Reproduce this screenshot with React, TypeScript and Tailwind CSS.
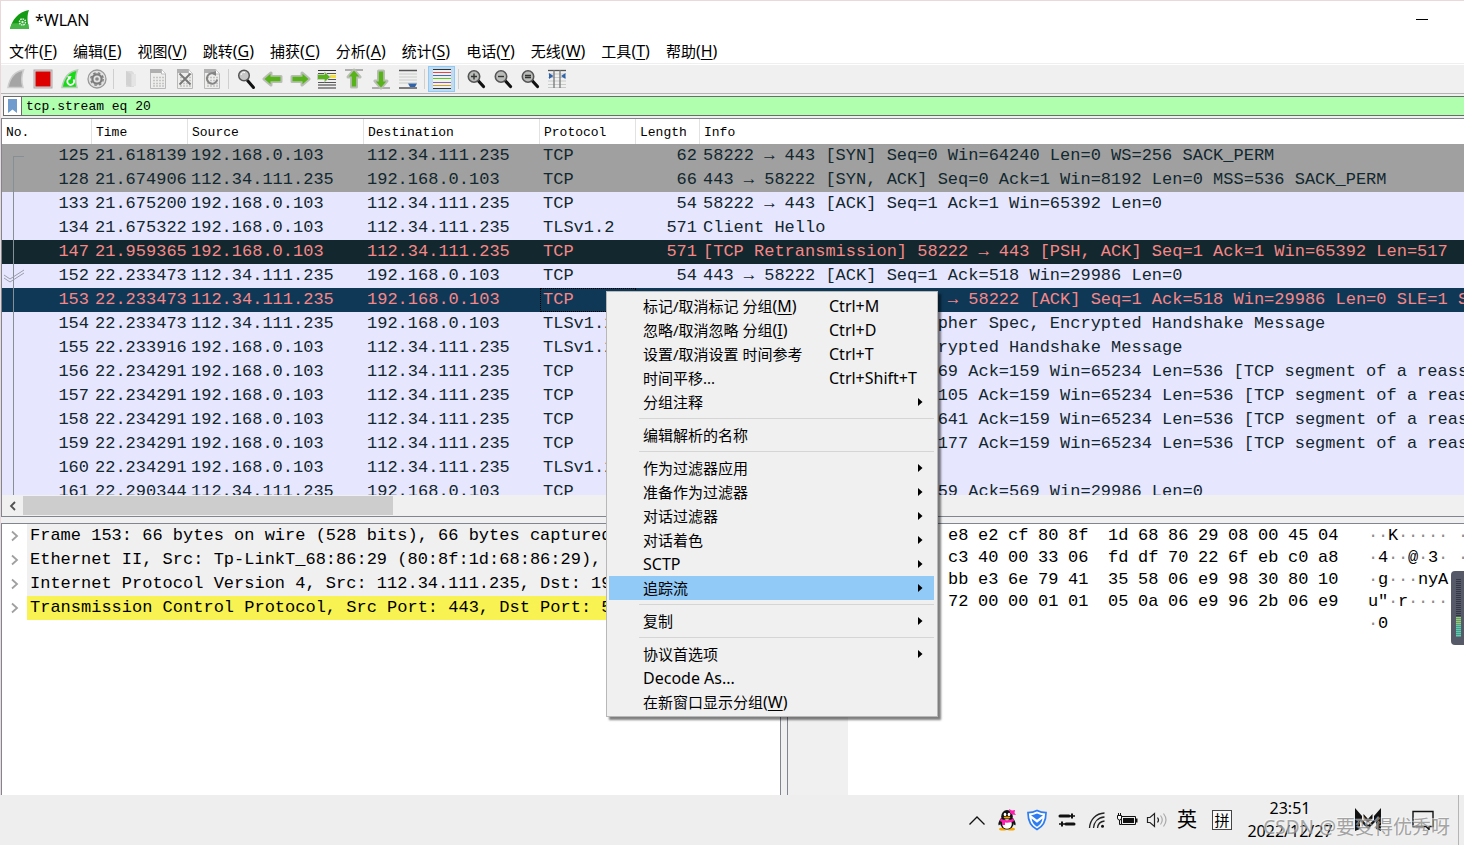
import React from "react";

const MONO = "font-['Liberation_Mono',monospace]";

type Tone = "gray" | "tls" | "bad" | "selected";

const toneClass: Record<Tone, string> = {
  gray: "bg-[#a0a0a0] text-[#12272e]",
  tls: "bg-[#e7e6ff] text-[#12272e]",
  bad: "bg-[#12272e] text-[#f78787]",
  selected: "bg-[#0f3857] text-[#f78787]",
};

const LOCAL = "192.168.0.103";
const REMOTE = "112.34.111.235";

type Packet = [number, string, boolean, string, string, string, Tone];

const packets: Packet[] = [
  [125, "21.618139", true, "TCP", "62", "58222 → 443 [SYN] Seq=0 Win=64240 Len=0 WS=256 SACK_PERM", "gray"],
  [128, "21.674906", false, "TCP", "66", "443 → 58222 [SYN, ACK] Seq=0 Ack=1 Win=8192 Len=0 MSS=536 SACK_PERM", "gray"],
  [133, "21.675200", true, "TCP", "54", "58222 → 443 [ACK] Seq=1 Ack=1 Win=65392 Len=0", "tls"],
  [134, "21.675322", true, "TLSv1.2", "571", "Client Hello", "tls"],
  [147, "21.959365", true, "TCP", "571", "[TCP Retransmission] 58222 → 443 [PSH, ACK] Seq=1 Ack=1 Win=65392 Len=517", "bad"],
  [152, "22.233473", false, "TCP", "54", "443 → 58222 [ACK] Seq=1 Ack=518 Win=29986 Len=0", "tls"],
  [153, "22.233473", false, "TCP", "66", "[TCP Dup ACK 152#1] 443 → 58222 [ACK] Seq=1 Ack=518 Win=29986 Len=0 SLE=1 SRE=518", "selected"],
  [154, "22.233473", false, "TLSv1.2", "", "Server Hello, Change Cipher Spec, Encrypted Handshake Message", "tls"],
  [155, "22.233916", true, "TLSv1.2", "", "Change Cipher Spec, Encrypted Handshake Message", "tls"],
  [156, "22.234291", true, "TCP", "590", "58222 → 443 [ACK] Seq=569 Ack=159 Win=65234 Len=536 [TCP segment of a reassembled PDU]", "tls"],
  [157, "22.234291", true, "TCP", "590", "58222 → 443 [ACK] Seq=1105 Ack=159 Win=65234 Len=536 [TCP segment of a reassembled PDU]", "tls"],
  [158, "22.234291", true, "TCP", "590", "58222 → 443 [ACK] Seq=1641 Ack=159 Win=65234 Len=536 [TCP segment of a reassembled PDU]", "tls"],
  [159, "22.234291", true, "TCP", "590", "58222 → 443 [ACK] Seq=2177 Ack=159 Win=65234 Len=536 [TCP segment of a reassembled PDU]", "tls"],
  [160, "22.234291", true, "TLSv1.2", "", "Application Data", "tls"],
  [161, "22.290344", false, "TCP", "54", "443 → 58222 [ACK] Seq=159 Ack=569 Win=29986 Len=0", "tls"],
];

const menus: [string, string][] = [
  ["文件", "F"], ["编辑", "E"], ["视图", "V"], ["跳转", "G"], ["捕获", "C"], ["分析", "A"],
  ["统计", "S"], ["电话", "Y"], ["无线", "W"], ["工具", "T"], ["帮助", "H"],
];

const details = [
  "Frame 153: 66 bytes on wire (528 bits), 66 bytes captured (528 bits)",
  "Ethernet II, Src: Tp-LinkT_68:86:29 (80:8f:1d:68:86:29), Dst:",
  "Internet Protocol Version 4, Src: 112.34.111.235, Dst: 192.168.0.103",
  "Transmission Control Protocol, Src Port: 443, Dst Port: 58222",
];

const hexRows: [string, string, string, string][] = [
  ["e8 e2 cf 80 8f", "1d 68 86 29 08 00 45 04", "··K·····", "·····"],
  ["c3 40 00 33 06", "fd df 70 22 6f eb c0 a8", "·4··@·3·", "·"],
  ["bb e3 6e 79 41", "35 58 06 e9 98 30 80 10", "·g···nyA", "5"],
  ["72 00 00 01 01", "05 0a 06 e9 96 2b 06 e9", "u\"·r····", "·"],
  ["", "", "·0", ""],
];

type MenuEntry = { label: string; latin?: boolean; key?: string; shortcut?: string; sub?: boolean; active?: boolean } | null;

const contextMenu: MenuEntry[] = [
  { label: "标记/取消标记 分组", key: "M", shortcut: "Ctrl+M" },
  { label: "忽略/取消忽略 分组", key: "I", shortcut: "Ctrl+D" },
  { label: "设置/取消设置 时间参考", shortcut: "Ctrl+T" },
  { label: "时间平移...", shortcut: "Ctrl+Shift+T" },
  { label: "分组注释", sub: true },
  null,
  { label: "编辑解析的名称" },
  null,
  { label: "作为过滤器应用", sub: true },
  { label: "准备作为过滤器", sub: true },
  { label: "对话过滤器", sub: true },
  { label: "对话着色", sub: true },
  { label: "SCTP", latin: true, sub: true },
  { label: "追踪流", sub: true, active: true },
  null,
  { label: "复制", sub: true },
  null,
  { label: "协议首选项", sub: true },
  { label: "Decode As...", latin: true },
  { label: "在新窗口显示分组", key: "W" },
];

function AccessKey({ k }: { k: string }) {
  return (
    <span className="text-base">
      (<u className="underline-offset-2">{k}</u>)
    </span>
  );
}

function Svg({ children }: { children: React.ReactNode }) {
  return (
    <svg width="22" height="22" viewBox="0 0 22 22" aria-hidden="true">
      {children}
    </svg>
  );
}

const FIN = "M3 19.5C4.500 11 9 3.500 18.500 2C16.500 7.500 16 13 18 19.500Z";

function Magnifier({ inner }: { inner?: React.ReactNode }) {
  return (
    <Svg>
      <path d="M13 12.500l5.500 6" stroke="#111" strokeWidth="3.200" strokeLinecap="round" />
      <circle cx="9" cy="8.500" r="5.700" fill="#b9bcb8" stroke="#555" strokeWidth="1.600" />
      {inner}
    </Svg>
  );
}

function GreenArrow({ turn, bar }: { turn: number; bar?: number }) {
  return (
    <Svg>
      {bar !== undefined && <path d={`M2 ${bar}h18`} stroke="#999" strokeWidth="1.500" />}
      <g transform={`rotate(${turn} 11 11)`}>
        <path d="M2 11l7-6v3.500h10v5h-10v3.500z" fill="#55ad14" stroke="#b9beb5" strokeWidth="3" strokeLinejoin="round" />
        <path d="M2.500 11l6-5.200v3h10v4.400h-10v3z" fill="#58b31a" />
      </g>
    </Svg>
  );
}

function Sheet({ children }: { children?: React.ReactNode }) {
  return (
    <Svg>
      <path d="M3.500 1.500h11l4 4v15h-15z" fill="#eeeeec" stroke="#b9b9b9" />
      <path d="M3 1h12l2 4H3z" fill="#b0b0b0" />
      <path d="M14.500 1.500v4.500h4" fill="#fff" stroke="#bbb" />
      <path d="M6 9.500h11M6 12.500h11M6 15.500h11M6 18h11" stroke="#c4c4c4" strokeWidth="1.500" strokeDasharray="2 1" />
      {children}
    </Svg>
  );
}

const toolbar: ([string, React.ReactNode] | null)[] = [
  ["开始捕获", <Svg><path d={FIN} fill="#a5a5a5" stroke="#cdcdcd" strokeWidth="1.500" /></Svg>],
  ["停止捕获", <Svg><rect x="2" y="2" width="18" height="18" fill="#d6d6d6" stroke="#aaa" /><rect x="3.500" y="3.500" width="15" height="15" fill="#dc0000" /></Svg>],
  ["重新开始捕获", <Svg><path d={FIN} fill="#16dc16" stroke="#b9ccb9" strokeWidth="1.500" /><path d="M14.500 11.500a3.400 3.400 0 1 1-4.500-1" fill="none" stroke="#fff" strokeWidth="1.800" /><path d="M8 8.500l4.500-.5-1.500 4z" fill="#fff" /></Svg>],
  ["捕获选项", <Svg><circle cx="11" cy="11" r="9" fill="#e2e2e2" stroke="#999" strokeWidth="1.300" /><circle cx="11" cy="11" r="4.600" fill="none" stroke="#7c7c7c" strokeWidth="2.200" /><circle cx="11" cy="11" r="6.200" fill="none" stroke="#7c7c7c" strokeWidth="1.400" strokeDasharray="2.500 2.400" /><circle cx="11" cy="11" r="1.800" fill="#888" /></Svg>],
  null,
  ["打开", <Svg><path d="M6 3h6l2 2v14H6z" fill="#dcdcdc" /><path d="M12 6h4v12h-4z" fill="#e4e4e4" /><path d="M6 3l5 3v13l-5-2z" fill="#d2d2d2" /></Svg>],
  ["保存", <Sheet />],
  ["关闭", <Sheet><path d="M5.500 5.500l11 11M16.500 5.500l-11 11" stroke="#777" strokeWidth="1.800" /></Sheet>],
  ["重新加载", <Sheet><path d="M14.500 6.500a5.200 5.200 0 1 0 1.700 5" fill="none" stroke="#858585" strokeWidth="2" /><path d="M10 5l5-2v5z" fill="#858585" /></Sheet>],
  null,
  ["查找", <Svg><path d="M12.500 12.500l6 7" stroke="#111" strokeWidth="3" strokeLinecap="round" /><circle cx="9" cy="7.500" r="5.300" fill="#c6c6c6" stroke="#555" strokeWidth="1.500" /><path d="M6 7a3 3 0 0 1 4-2.500" stroke="#fff" fill="none" /></Svg>],
  ["上一个", <GreenArrow turn={0} />],
  ["下一个", <GreenArrow turn={180} />],
  ["转到分组", <Svg><path d="M2 2.500h18M2 17h18M2 20h18" stroke="#333" strokeWidth="1.200" /><path d="M2 5.500h18M2 11.500h18M2 14.500h18" stroke="#555" /><path d="M14 8.500h6" stroke="#f5df32" strokeWidth="3" /><path d="M1.500 6.500h7V4l6 5-6 5v-2.500h-7z" fill="#58b31a" stroke="#c4ccbe" /></Svg>],
  ["首个分组", <GreenArrow turn={90} bar={2} />],
  ["最后分组", <GreenArrow turn={270} bar={20} />],
  ["自动滚动", <Svg><path d="M2 2.500h18M2 20h18" stroke="#555" strokeWidth="1.300" /><path d="M2 6h18M2 9h18M2 12h18M2 15h18" stroke="#c8ccc8" /><path d="M11 15.500h9l-2 3.500h-5z" fill="#2f64ad" /></Svg>],
  null,
  ["着色", <Svg><path d="M2 1.500h18M2 20.500h18" stroke="#333" /><path d="M2 2h18v18H2z" fill="#f0f0f0" /><path d="M2 4.500h18" stroke="#e04a4a" /><path d="M2 7.500h18" stroke="#3a71b5" /><path d="M2 10.500h18" stroke="#5cc624" /><path d="M2 14.500h18" stroke="#8465a0" /><path d="M2 17.500h18" stroke="#c9a31c" /></Svg>],
  null,
  ["放大", <Magnifier inner={<path d="M6 8.500h6M9 5.500v6" stroke="#333" strokeWidth="1.400" />} />],
  ["缩小", <Magnifier inner={<path d="M6 8.500h6" stroke="#333" strokeWidth="1.400" />} />],
  ["正常大小", <Magnifier inner={<path d="M6 7.500h6M6 9.500h6" stroke="#333" strokeWidth="1.400" />} />],
  ["调整列宽", <Svg><path d="M2 2.500h18" stroke="#555" strokeWidth="1.300" /><path d="M2 6h18M2 9.500h18M2 13h18M2 16.500h18M2 19.500h18" stroke="#c8ccc8" /><path d="M8 2v18M14 2v18" stroke="#777" strokeWidth="1.300" /><path d="M3 5l4.500 3L3 11zM19.500 5L15 8l4.500 3z" fill="#2f64ad" /></Svg>],
];

function Ascii({ text }: { text: string }) {
  return (
    <span className="flex">
      {text.split("").map((c, i) => (
        <span key={i} className={c === "·" ? "w-[10px] text-[#8c8c8c]" : "w-[10px]"}>{c}</span>
      ))}
    </span>
  );
}

function Bytes({ text }: { text: string }) {
  return (
    <>
      {text.split(" ").filter(Boolean).map((b, i) => (
        <span key={i} className="w-[30px]">{b}</span>
      ))}
    </>
  );
}

function PacketList() {
  const head = "border-r border-[#e2e2e2] p-0 pt-[2px] pl-1 text-left font-normal";
  return (
    <section className="flex min-h-0 flex-[398_1_0px] flex-col border-y border-l border-[#7f8591] bg-white">
      <div className="relative min-h-0 flex-1 overflow-hidden">
        <table className={`w-full table-fixed border-separate border-spacing-0 whitespace-pre ${MONO}`}>
          <colgroup>
            <col className="w-[90px]" />
            <col className="w-[96px]" />
            <col className="w-[176px]" />
            <col className="w-[176px]" />
            <col className="w-[96px]" />
            <col className="w-[64px]" />
            <col />
          </colgroup>
          <thead>
            <tr className="h-[25px] text-[13px] leading-5 text-black">
              <th className={head}>No.</th>
              <th className={head}>Time</th>
              <th className={head}>Source</th>
              <th className={head}>Destination</th>
              <th className={head}>Protocol</th>
              <th className={head}>Length</th>
              <th className="p-0 pt-[2px] pl-1 text-left font-normal">Info</th>
            </tr>
          </thead>
          <tbody className="text-[17px] leading-6">
            {packets.map(([no, time, outgoing, proto, len, info, tone]) => (
              <tr key={no} className={`h-6 ${toneClass[tone]}`}>
                <td className="p-0 pr-[3px] text-right">{no}</td>
                <td className="p-0 pl-[3px]">{time}</td>
                <td className="p-0 pl-[3px]">{outgoing ? LOCAL : REMOTE}</td>
                <td className="p-0 pl-[3px]">{outgoing ? REMOTE : LOCAL}</td>
                <td className={tone === "selected" ? "p-0 pl-[3px] outline-1 -outline-offset-1 outline-dotted outline-black" : "p-0 pl-[3px]"}>{proto}</td>
                <td className="p-0 pr-[3px] text-right">{len}</td>
                <td className="overflow-hidden p-0 pl-[3px]">{info}</td>
              </tr>
            ))}
          </tbody>
        </table>
        <div className="absolute top-[37px] bottom-0 left-[11px] w-[11px] border-t border-l border-[#868e96]" />
        <svg className="absolute top-[150px] left-[2px]" width="20" height="14" viewBox="0 0 20 14" aria-hidden="true">
          <path d="M0 6l6 4L20 1M0 9l6 4L20 4" fill="none" stroke="#9a9dab" />
        </svg>
      </div>
      <div className="flex h-[21px] shrink-0 bg-[#f0f0f0]">
        <button aria-label="向左滚动" className="flex w-[21px] items-center justify-center">
          <svg width="8" height="10" viewBox="0 0 8 10"><path d="M6 1L2 5l4 4" fill="none" stroke="#505050" strokeWidth="1.800" /></svg>
        </button>
        <div className="my-px w-[370px] bg-[#cdcdcd]" />
      </div>
    </section>
  );
}

function ContextMenu() {
  return (
    <div role="menu" className="absolute top-[291px] left-[606px] w-[332px] border border-[#b8b8b8] bg-[#f0f0f0] p-[2px] pr-[3px] text-[15px] text-black shadow-[3px_3px_2px_rgba(0,0,0,0.5)]">
      {contextMenu.map((m, i) =>
        m === null ? (
          <div key={i} role="separator" className="flex h-[9px] items-center pl-[30px]"><div className="h-px w-full bg-[#d5d5d5]" /></div>
        ) : (
          <button key={i} role="menuitem" className={`flex h-6 w-full items-center pl-[34px] text-left leading-6 whitespace-pre ${m.active ? "bg-[#91c9f7]" : ""}`}>
            <span className={m.latin ? "w-[186px] text-base" : "w-[186px]"}>{m.label}{m.key && <AccessKey k={m.key} />}</span>
            <span className="flex-1 text-base">{m.shortcut}</span>
            {m.sub && <svg className="mr-[11px]" width="5" height="8" viewBox="0 0 5 8"><path d="M0 0l4.500 4L0 8z" fill="#000" /></svg>}
          </button>
        )
      )}
    </div>
  );
}

function Taskbar() {
  const slot = "flex w-[30px] justify-center";
  return (
    <footer className="flex h-[50px] shrink-0 items-stretch justify-end bg-[#eeeeee] text-black">
      <div className="flex items-center">
        <button aria-label="显示隐藏的图标" className={slot}>
          <svg width="18" height="12" viewBox="0 0 18 12"><path d="M1.500 10.500L9 3l7.500 7.500" fill="none" stroke="#111" strokeWidth="1.300" /></svg>
        </button>
        <button aria-label="QQ" className={slot}>
          <svg width="20" height="22" viewBox="0 0 20 22">
            <ellipse cx="6" cy="20" rx="4" ry="1.600" fill="#f5a400" /><ellipse cx="14" cy="20" rx="4" ry="1.600" fill="#f5a400" />
            <path d="M4 9c-2 3-3 5-2.500 7 .6.800 1.500-.5 2-1.500M16 9c2 3 3 5 2.500 7-.6.800-1.500-.5-2-1.500" fill="#111" />
            <ellipse cx="10" cy="13.500" rx="7" ry="7" fill="#111" />
            <ellipse cx="10" cy="7.500" rx="5.800" ry="6.500" fill="#111" />
            <ellipse cx="10" cy="15" rx="4.800" ry="4.800" fill="#fff" />
            <ellipse cx="8" cy="5.500" rx="1.300" ry="1.800" fill="#fff" /><ellipse cx="12" cy="5.500" rx="1.300" ry="1.800" fill="#fff" />
            <ellipse cx="10" cy="8.500" rx="3.300" ry="1.100" fill="#f5a400" />
            <path d="M3.500 9.500c4 2.200 9 2.200 13 0l.5 2.500c-4 2.300-10 2.300-14 0z" fill="#ff1fae" /><path d="M5 12h3v4H5z" fill="#ff1fae" />
            <path d="M12 0l3 1.500L18 1l-.5 3 1.500 2-4-.5-2-1.500z" fill="#ff1fae" />
          </svg>
        </button>
        <button aria-label="电脑管家" className={slot}>
          <svg width="22" height="22" viewBox="0 0 22 22">
            <path d="M11 1.500c3 1.600 6 2.200 9 2.200 0 8-2.500 13.500-9 16.800C4.500 17.200 2 11.700 2 3.700c3 0 6-.6 9-2.200z" fill="#fff" stroke="#2d7cf0" strokeWidth="1.700" />
            <path d="M5 6.200c2.500-.2 4.200-.8 6-1.700 1.800.9 3.500 1.500 6 1.700l-6 4.600z" fill="#2d7cf0" />
            <path d="M5.500 9.500l5.500 4.300 5.500-4.300c-.7 4-2.600 6.500-5.500 8.300-2.900-1.800-4.800-4.300-5.500-8.300z" fill="#2d7cf0" />
          </svg>
        </button>
        <button aria-label="设备" className={slot}>
          <svg width="18" height="16" viewBox="0 0 18 16"><path d="M2 4h9M8 12h8" stroke="#111" strokeWidth="3" strokeLinecap="round" /><path d="M11 4h6M1 12h6" stroke="#111" strokeWidth="1.400" /><path d="M13 1.500h2v5h-2zM3 9.500h2v5H3z" fill="#111" /></svg>
        </button>
        <button aria-label="网络" className={slot}>
          <svg width="18" height="18" viewBox="0 0 18 18" fill="none" stroke="#222" strokeWidth="1.300"><path d="M1.500 17C2 8.500 8 2.500 16.500 2M5.500 17C6 11 10 6.500 16.500 6M9.500 17c.3-3.500 3-6.500 7-7" /><circle cx="14.500" cy="15.300" r="1.500" fill="#111" stroke="none" /></svg>
        </button>
        <button aria-label="电池" className={slot}>
          <svg width="22" height="16" viewBox="0 0 22 16"><path d="M5.500 4.500h14v8h-14z" fill="none" stroke="#111" /><path d="M7 6h11v5H7zM20 6.500h1.500v4H20z" fill="#111" /><path d="M1.500 3.500h4v2.500a2 2 0 0 1-4 0z" fill="#fff" stroke="#111" /><path d="M2.500 1v2M4.500 1v2M3.500 8v4.500h2" stroke="#111" fill="none" /></svg>
        </button>
        <button aria-label="音量" className={slot}>
          <svg width="22" height="18" viewBox="0 0 22 18" fill="none" stroke="#222" strokeWidth="1.200"><path d="M1.500 6.500H4l4.500-4v13l-4.500-4H1.500z" /><path d="M11.500 6.500q2 2.500 0 5" /><path d="M14.500 4.500q3.500 4.500 0 9M17.500 2.500q5 6.500 0 13" stroke="#aaa" /></svg>
        </button>
        <button className="w-[30px] text-center text-xl leading-6">英</button>
        <button className="ml-[10px] h-5 w-5 border border-[#444] bg-[#fafafa] text-center text-[15px] leading-[18px]">拼</button>
      </div>
      <time className="flex w-[116px] flex-col items-center pt-[2px] text-base leading-[23px]"><span>23:51</span><span>2022/12/27</span></time>
      <button aria-label="M" className="flex w-10 items-center justify-center">
        <svg width="28" height="24" viewBox="0 0 28 24"><path d="M1 0l7 8v4l6 5 6-5V8l7-8v23l-5-2v-8l-8 8-8-8v8l-5 2z" fill="#111" /><path d="M9.500 6v4.500l4.500 4 4.500-4V6L14 11z" fill="#111" /></svg>
      </button>
      <button aria-label="通知" className="flex w-[70px] items-center justify-center">
        <svg width="22" height="20" viewBox="0 0 22 20"><path d="M1 1.500h20v15h-4v3l-3-3H1z" fill="none" stroke="#111" strokeWidth="1.400" /></svg>
      </button>
      <button aria-label="显示桌面" className="w-[6px] border-l border-[#b5b5b5]" />
    </footer>
  );
}

export default function App() {
  return (
    <div className="relative flex h-screen flex-col overflow-hidden bg-[#ead9da] font-['Noto_Sans','Noto_Sans_CJK_SC',sans-serif]">
      <main className="mt-px ml-px flex min-h-0 flex-1 flex-col bg-[#f0f0f0]">
        <header className="bg-white">
          <div className="flex h-[37px] items-center pl-[9px]">
            <svg width="20" height="20" viewBox="0 0 20 20" aria-hidden="true">
              <path d="M0 19C2 10 8 2 19 0c-2 5-2 12 0 19z" fill="#139c13" />
              <path d="M0 19c.5-2 1-3.500 2-5.500 5-.5 11-.500 16.500.5l.5 5z" fill="#45b545" />
              <circle cx="12.500" cy="12" r="3" fill="none" stroke="#e8f5e8" strokeWidth="1.500" strokeDasharray="1.500 .8" />
              <circle cx="12.500" cy="12" r="1.200" fill="#e8f5e8" />
            </svg>
            <h1 className="flex-1 pl-[5px] text-base text-black">*WLAN</h1>
            <button aria-label="最小化" className="mr-9 flex h-6 w-3 items-center"><span className="h-px w-full bg-black" /></button>
          </div>
          <nav className="flex h-[25px] items-center text-[15px] text-black">
            {menus.map(([t, k]) => (
              <button key={k} className="px-2 whitespace-nowrap">{t}<AccessKey k={k} /></button>
            ))}
          </nav>
          <div className="mb-px h-px bg-[#efefef]" />
        </header>
        <div className="flex h-[29px] items-center border-b border-[#b4b4b4] pl-px">
          {toolbar.map((item, i) =>
            item === null ? (
              <div key={i} className="flex w-[7px] justify-center"><div className="h-5 w-px bg-[#cfcfcf]" /></div>
            ) : (
              <button key={i} aria-label={item[0]} className={`flex h-[26px] w-[27px] items-center justify-center ${item[0] === "着色" ? "border border-[#90c8f6] bg-[#c0dcf3]" : ""}`}>{item[1]}</button>
            )
          )}
        </div>
        <div className="mt-[2px] mb-[2px] ml-[2px] flex h-5 shrink-0 border-y border-l border-[#6b6b6b] bg-[#afffaf]">
          <button aria-label="书签" className="flex w-[18px] items-center justify-center border-r border-[#6b6b6b] bg-white">
            <svg width="9" height="14" viewBox="0 0 9 14"><path d="M0 0h9v14l-4.500-3.500L0 14z" fill="#6f9ccd" /></svg>
          </button>
          <input aria-label="显示过滤器" defaultValue="tcp.stream eq 20" className={`min-w-0 flex-1 bg-transparent pt-[2px] pl-[4px] text-[13px] leading-4 text-black outline-none ${MONO}`} />
        </div>
        <PacketList />
        <div className="flex min-h-0 flex-[272_1_0px] gap-[6px] pt-[6px]">
          <section className="w-[780px] shrink overflow-hidden border-x border-t border-[#7f8591] bg-white">
            {details.map((d, i) => (
              <div key={d} className={`flex h-6 text-[17px] leading-6 whitespace-pre text-black ${MONO}`}>
                <button aria-label="展开" className="flex w-[25px] shrink-0 items-center justify-center">
                  <svg width="8" height="12" viewBox="0 0 8 12"><path d="M1 1.500L6 6l-5 4.500" fill="none" stroke="#a0a0a0" strokeWidth="1.800" /></svg>
                </button>
                <span className={i === 3 ? "flex-1 bg-[#f8f352] pl-[3px]" : "flex-1 bg-[#f0f0f0] pl-[3px]"}>{d}</span>
              </div>
            ))}
          </section>
          <section className="flex min-w-0 flex-1 overflow-hidden border-t border-l border-[#7f8591] bg-white">
            <div className="w-[60px] shrink-0 bg-[#f0f0f0]" />
            <div className={`pt-px pl-[100px] text-[17px] leading-[22px] text-black ${MONO}`}>
              {hexRows.map(([a, b, c, d], i) => (
                <div key={i} className="flex h-[22px]">
                  <span className="flex w-[160px] shrink-0"><Bytes text={a} /></span>
                  <span className="flex w-[260px] shrink-0"><Bytes text={b} /></span>
                  <span className="w-[90px] shrink-0"><Ascii text={c} /></span>
                  <Ascii text={d} />
                </div>
              ))}
            </div>
          </section>
        </div>
      </main>
      <Taskbar />
      <ContextMenu />
      <svg className="absolute top-[571px] right-0" width="13" height="75" viewBox="0 0 13 75" aria-hidden="true">
        <path d="M13 0H4a4 4 0 0 0-4 4v66a4 4 0 0 0 4 4h9z" fill="#555968" />
        <path d="M7.500 8v38" stroke="#343846" strokeWidth="5" strokeDasharray="1 1" />
        <path d="M7.500 46v8" stroke="#8fd07a" strokeWidth="5" strokeDasharray="1.500 .5" />
        <path d="M7.500 54v12" stroke="#55d1b0" strokeWidth="5" strokeDasharray="1.500 .5" />
      </svg>
      <div className="pointer-events-none absolute right-[14px] bottom-[6px] text-[19px] leading-6 whitespace-nowrap text-[#8e8e8e]/80 [text-shadow:-1px_-1px_0_rgba(255,255,255,0.5)]">CSDN @要变得优秀呀</div>
    </div>
  );
}
